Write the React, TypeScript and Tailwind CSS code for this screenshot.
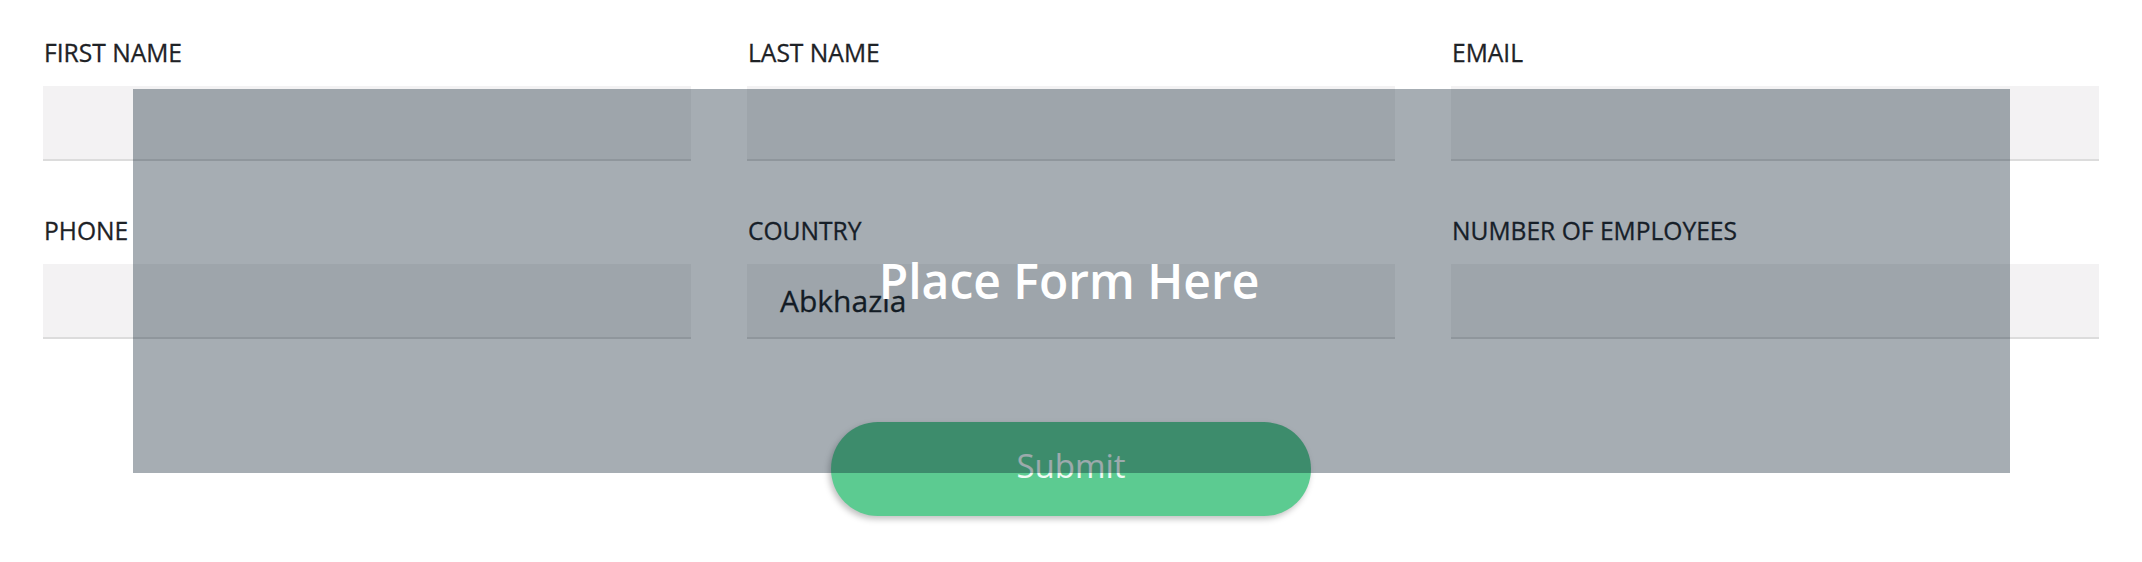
import React from "react";

const fields: { label: string; value?: string }[] = [
  { label: "FIRST NAME" },
  { label: "LAST NAME" },
  { label: "EMAIL" },
  { label: "PHONE" },
  { label: "COUNTRY", value: "Abkhazia" },
  { label: "NUMBER OF EMPLOYEES" },
];

export default function App() {
  return (
    <div
      className="relative h-[562px] w-full overflow-hidden bg-white px-[43px] pt-[36px]"
      style={{ fontFamily: '"Open Sans", "Noto Sans", sans-serif' }}
    >
      <div className="grid grid-cols-3 gap-x-[56px] gap-y-[53px]">
        {fields.map((f) => (
          <div key={f.label}>
            <div className="pl-[1px] text-[24.6px] leading-[33px] font-normal text-[#1e2226] [-webkit-text-stroke:0.3px_#1e2226]">
              {f.label}
            </div>
            <div className="mt-[17px] flex h-[75px] items-center border-b-2 border-[#dcdcdc] bg-[#f3f2f3] px-[33px] text-[30px] font-normal text-[#1a1d21] [-webkit-text-stroke:0.3px_#1a1d21]">
              {f.value}
            </div>
          </div>
        ))}
      </div>
      <div className="mt-[83px] flex justify-center">
        <button className="h-[94px] w-[480px] rounded-full bg-[#5ccb91] pb-[6px] text-[33px] font-normal text-white/90 shadow-[-2px_3px_6px_rgba(0,0,0,0.25)]">
          Submit
        </button>
      </div>
      <div className="absolute left-[133px] top-[89px] flex h-[384px] w-[1877px] items-center justify-center bg-[rgba(8,28,43,0.36)]">
        <span className="pr-[5px] text-[48px] font-semibold text-white">Place Form Here</span>
      </div>
    </div>
  );
}
